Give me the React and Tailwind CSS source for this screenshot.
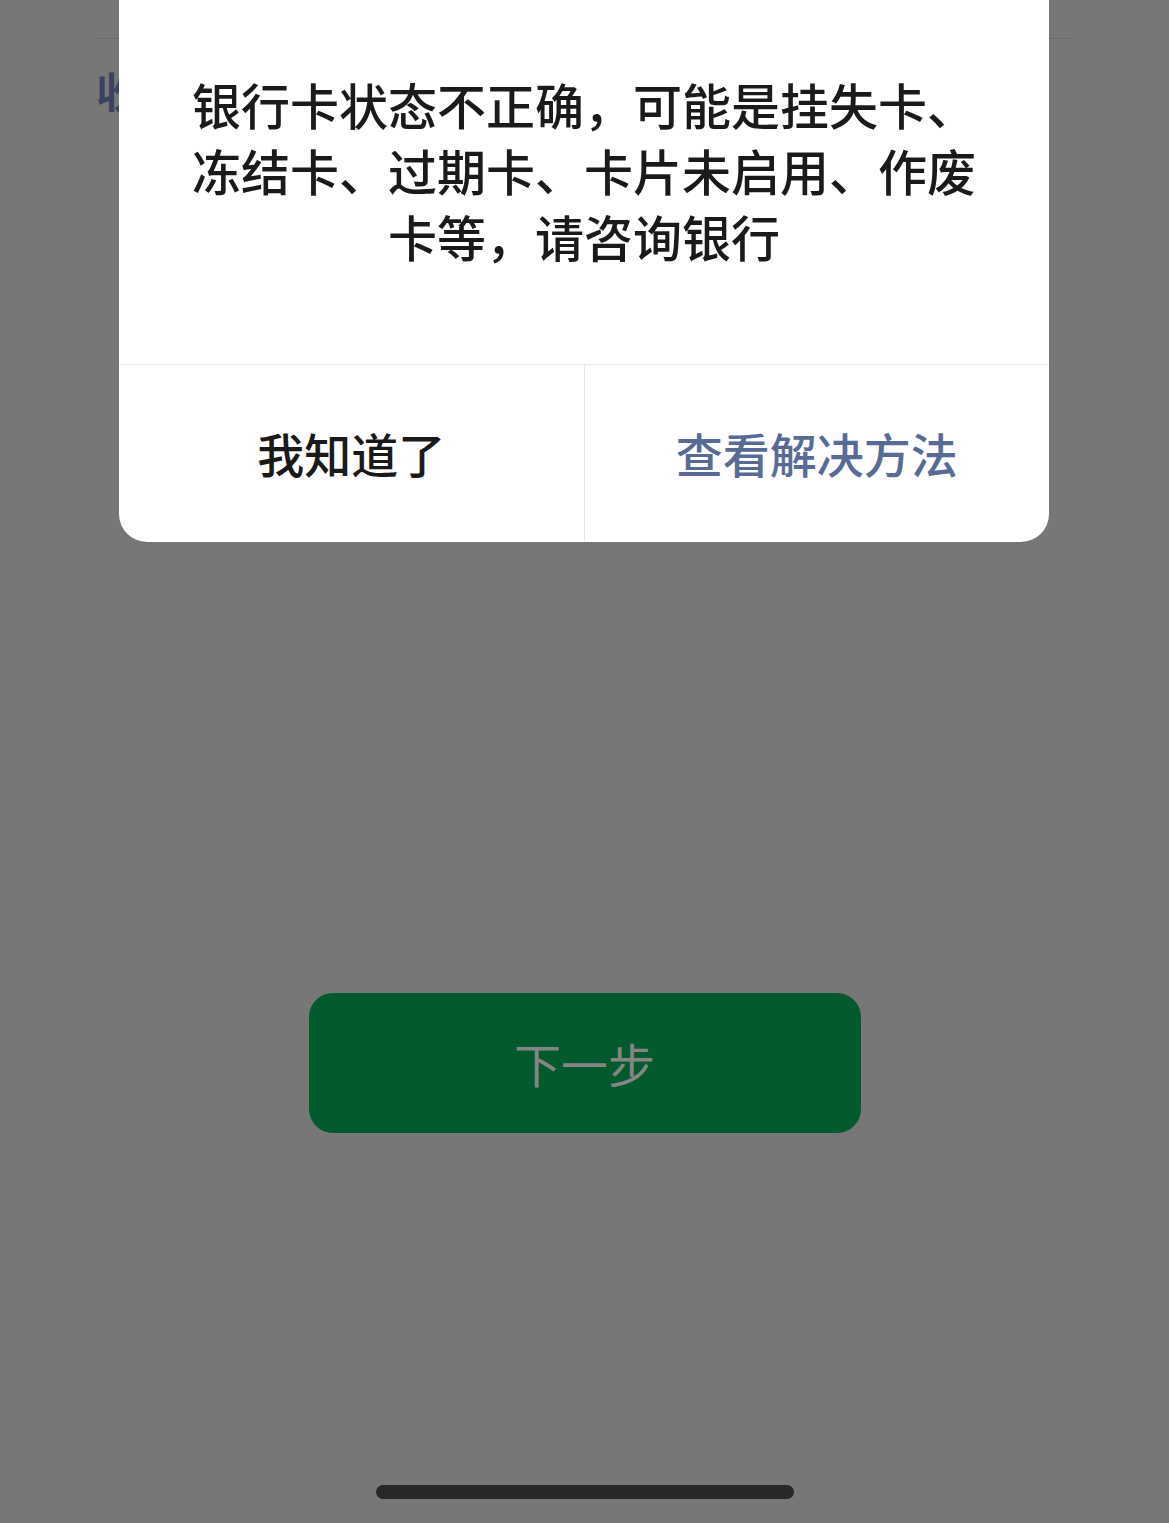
import React from "react";

export default function App() {
  const cjk = { fontFamily: '"Noto Sans CJK SC", "Noto Sans", sans-serif' };
  return (
    <div className="relative w-[1169px] h-[1523px] bg-[#777777] overflow-hidden" style={cjk}>
      {/* underlying page (dimmed) */}
      <div className="flex flex-col h-full">
        <div className="h-[38px]" />
        <div className="mx-[95px] h-px bg-[#6b6b6b]" />
        <div className="pl-[96px] pt-[30px] h-[70px] text-[42px] leading-[42px] font-bold text-[#3b4261]">收</div>
        <div className="h-[884px]" />
        <div className="flex justify-center">
          <div className="w-[552px] h-[140px] rounded-[24px] bg-[#035a2c] flex items-center justify-center text-[47px] text-[#858585]">
            下一步
          </div>
        </div>
        <div className="h-[352px]" />
        <div className="flex justify-center">
          <div className="w-[418px] h-[14px] rounded-full bg-[#282828]" />
        </div>
      </div>

      {/* dialog overlay */}
      <div className="absolute left-[119px] top-0 w-[930px] bg-white rounded-b-[28px] overflow-hidden">
        <div className="flex justify-center pt-[71px] pb-[95px]">
          <p className="w-[790px] text-center text-[49px] leading-[66px] font-medium text-[#1a1a1a]">
            银行卡状态不正确，可能是挂失卡、冻结卡、过期卡、卡片未启用、作废卡等，请咨询银行
          </p>
        </div>
        <div className="flex h-[178px] border-t border-[#e6e6e6]">
          <div className="flex-1 flex items-center justify-center text-[47px] font-medium text-[#1a1a1a] border-r border-[#e6e6e6]">
            我知道了
          </div>
          <div className="flex-1 flex items-center justify-center text-[47px] font-medium text-[#576b95]">
            查看解决方法
          </div>
        </div>
      </div>
    </div>
  );
}
